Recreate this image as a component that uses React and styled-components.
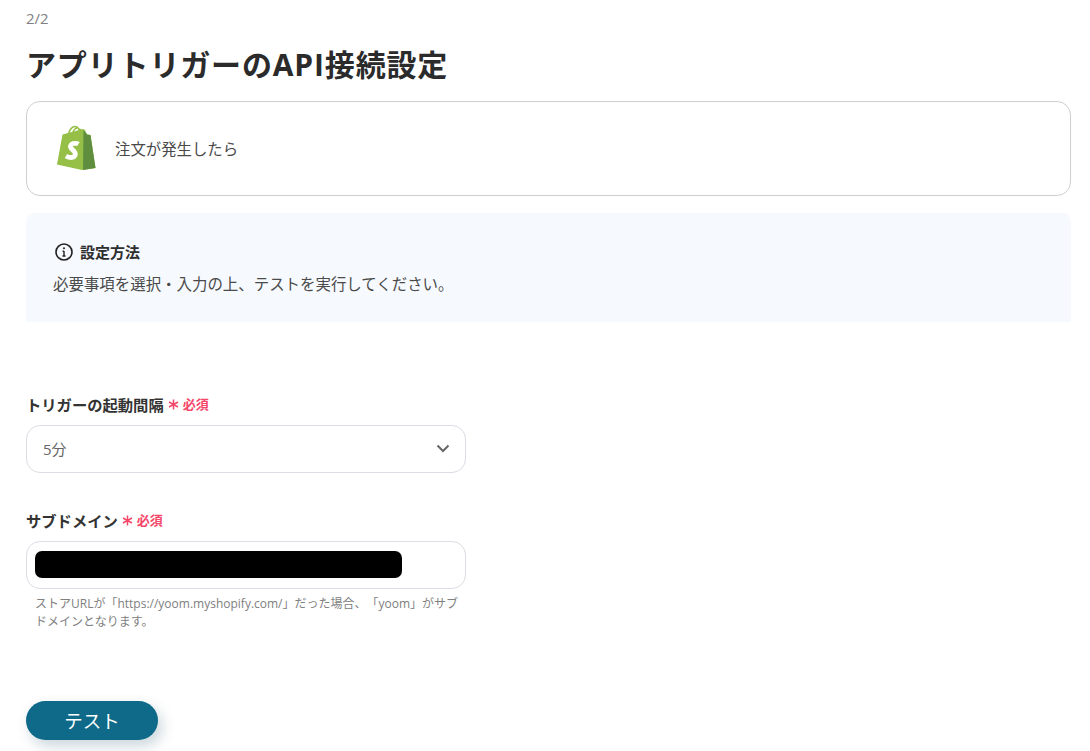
import React from "react";
import styled, { createGlobalStyle } from "styled-components";

const Global = createGlobalStyle`
  html, body { margin: 0; padding: 0; background: #fff; }
  body { font-family: "Open Sans", "Noto Sans CJK JP", sans-serif; color: #333; overflow: hidden; text-spacing-trim: space-all; }
  * { box-sizing: border-box; }
`;

const Page = styled.main`
  width: 1090px;
  height: 751px;
  overflow: hidden;
  padding: 9px 19px 0 26px;
  display: flex;
  flex-direction: column;
`;
const Step = styled.div`
  font-size: 15px;
  line-height: 19px;
  color: #808080;
`;
const Title = styled.h1`
  margin: 15px 0 0;
  font-size: 30px;
  line-height: 44px;
  font-weight: 700;
  color: #2b2b2b;
  letter-spacing: 0.85px;
`;
const AppCard = styled.section`
  margin-top: 14px;
  height: 95px;
  border: 1px solid #cfcfcf;
  border-radius: 14px;
  display: flex;
  align-items: center;
  gap: 19px;
  padding-left: 29px;
  font-size: 15.4px;
  color: #4a4a4a;
`;
const LogoSlot = styled.span`
  display: flex;
  margin-top: -3px;
`;
const Notice = styled.section`
  margin-top: 17px;
  height: 109px;
  background: #f6f9fd;
  border-radius: 8px 8px 0 0;
  padding: 28px 0 0 27px;
`;
const NoticeHead = styled.div`
  display: flex;
  align-items: center;
  gap: 6px;
  padding-left: 1px;
  font-size: 15px;
  line-height: 22px;
  font-weight: 700;
  color: #2e2e2e;
`;
const NoticeBody = styled.p`
  margin: 10px 0 0;
  font-size: 15.45px;
  line-height: 22px;
  color: #4a4a4a;
`;
const Field = styled.div`
  width: 440px;
  margin-top: ${p => p.$top}px;
`;
const Label = styled.div`
  display: flex;
  align-items: center;
  gap: 4px;
  height: 22px;
  padding-bottom: 1px;
  font-size: 15.3px;
  font-weight: 700;
  color: #333;
`;
const Required = styled.span`
  display: flex;
  align-items: center;
  gap: 4px;
  font-size: 13px;
  font-weight: 700;
  color: #f5476a;
`;
const AsteriskSlot = styled.span`
  display: flex;
  margin-top: 2px;
`;
const Box = styled.div`
  margin-top: 10px;
  height: 48px;
  border: 1px solid #dcdce4;
  border-radius: 14px;
  display: flex;
  align-items: center;
  justify-content: space-between;
  padding: 0 15px 2px 16px;
  font-size: 15px;
  color: #666;
`;
const MaskedBox = styled(Box)`
  padding: 0 0 2px 8px;
  justify-content: flex-start;
`;
const Mask = styled.div`
  width: 367px;
  height: 27px;
  background: #000;
  border-radius: 7px;
`;
const Hint = styled.p`
  margin: 6px 0 0;
  padding: 0 0 0 9px;
  font-size: 12px;
  line-height: 18px;
  color: #808080;
`;
const TestButton = styled.button`
  margin-top: 70px;
  width: 132px;
  height: 39px;
  flex: none;
  border: none;
  border-radius: 20px;
  background: #0e6a88;
  color: #fff;
  font: 400 18.500px/39px "Open Sans", "Noto Sans CJK JP", sans-serif;
  padding: 0;
  box-shadow: 4px 6px 14px rgba(14, 70, 90, 0.22);
`;

const ShopifyLogo = () => (
  <svg width="40" height="45" viewBox="0 0 40 45" aria-hidden="true">
    <path d="M1 39.500 6.500 9.500 27 4l2 1 2 4.500 3.500.6L39.500 43 26 45Z" fill="#95bf47" />
    <path d="M27.500 5 31 9.500l3.500.6L39.500 43 27 45Z" fill="#5e8e3e" />
    <path d="M12 11c.6-4 3-9.500 7-9.500 3 0 4.500 3 4.800 7M16 10.500c.6-3.500 2-6.500 5-7.500M23 4c2 .5 3 2.500 3.300 4.500" fill="none" stroke="#95bf47" strokeWidth="1.500" />
    <path d="M22.500 19c-1.500-.9-7-1.500-8 2-.8 3.300 5.500 4.500 4.800 8.500-.6 3.300-5 4-9.300 1.500" fill="none" stroke="#fff" strokeWidth="4.800" />
  </svg>
);

const InfoIcon = () => (
  <svg width="20" height="20" viewBox="0 0 20 20" aria-hidden="true">
    <circle cx="10" cy="10" r="8" fill="none" stroke="#222" strokeWidth="1.600" />
    <path d="M10 9v5M8.600 9.200H10M8.500 14h3" fill="none" stroke="#222" strokeWidth="1.400" />
    <circle cx="10" cy="6.300" r="1" fill="#222" />
  </svg>
);

const Chevron = () => (
  <svg width="14" height="9" viewBox="0 0 14 9" aria-hidden="true">
    <path d="M1.500 1.500 7 7l5.500-5.500" fill="none" stroke="#666" strokeWidth="2" />
  </svg>
);

const Asterisk = () => (
  <AsteriskSlot>
    <svg width="11" height="11" viewBox="0 0 11 11" aria-hidden="true">
      <path d="M5.500 .5v10M1 3l9 5M10 3l-9 5" fill="none" stroke="#f5476a" strokeWidth="1.500" />
    </svg>
  </AsteriskSlot>
);

const Req = () => (
  <Required><Asterisk />必須</Required>
);

export default function App() {
  return (
    <Page>
      <Global />
      <Step>2/2</Step>
      <Title>アプリトリガーのAPI接続設定</Title>
      <AppCard>
        <LogoSlot><ShopifyLogo /></LogoSlot>
        注文が発生したら
      </AppCard>
      <Notice>
        <NoticeHead><InfoIcon />設定方法</NoticeHead>
        <NoticeBody>必要事項を選択・入力の上、テストを実行してください。</NoticeBody>
      </Notice>
      <Field $top={71}>
        <Label>トリガーの起動間隔 <Req /></Label>
        <Box>5分<Chevron /></Box>
      </Field>
      <Field $top={36}>
        <Label>サブドメイン <Req /></Label>
        <MaskedBox><Mask /></MaskedBox>
        <Hint>ストアURLが「https://yoom.myshopify.com/」だった場合、「yoom」がサブドメインとなります。</Hint>
      </Field>
      <TestButton>テスト</TestButton>
    </Page>
  );
}
